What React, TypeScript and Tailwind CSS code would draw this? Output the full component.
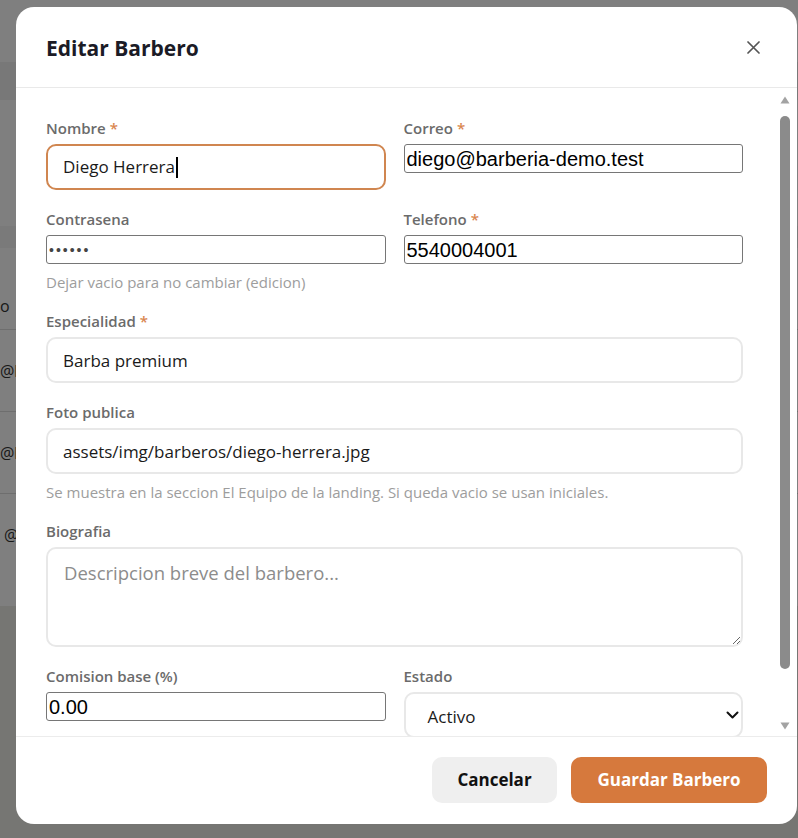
import type { ReactNode } from "react";

const ORANGE = "#d6793d";

function Label({ children, required = false }: { children: ReactNode; required?: boolean }) {
  return (
    <label className="mb-[6px] block text-[15px] font-semibold leading-5 text-[#6b6b6b]">
      {children}
      {required && <span className="ml-[4px] text-[#d9864f]">*</span>}
    </label>
  );
}

function Hint({ children }: { children: ReactNode }) {
  return <p className="mt-[8px] text-[15px] leading-5 text-[#9d9d9d]">{children}</p>;
}

// Inputs that keep the browser's stock look (no custom class from the app)
const nativeInput =
  "block h-[29px] w-full rounded-[3px] border border-[#767676] bg-white px-[2px] font-['Liberation_Sans',Arial,sans-serif] text-[20px] text-black outline-none";

const styledInput =
  "block h-[46px] w-full rounded-[10px] border-2 border-[#e8e8e8] bg-white px-[15px] text-[17px] text-[#1a1a1a] outline-none";

function BackgroundPage() {
  return (
    <div className="flex h-full flex-col bg-[#edece6] text-[16px] text-[#333]">
      <div className="h-[62px] bg-white" />
      <div className="h-[38px] bg-[#f1f1f1]" />
      <div className="h-[126px] bg-white" />
      <div className="h-[22px] bg-[#f4f4f4]" />
      <div className="flex h-[82px] items-center border-b border-[#dcdcdc] bg-white">
        <span className="mt-[34px]">o</span>
      </div>
      <div className="flex h-[82px] items-center border-b border-[#dcdcdc] bg-white">
        <span>@barberia-demo.test</span>
      </div>
      <div className="flex h-[82px] items-center border-b border-[#dcdcdc] bg-white">
        <span>@barberia-demo.test</span>
      </div>
      <div className="flex h-[82px] items-center bg-white">
        <span className="ml-[4px]">@barberia-demo.test</span>
      </div>
      <div className="h-[30px] bg-white" />
    </div>
  );
}

function Scrollbar() {
  return (
    <div className="flex w-[15px] flex-col items-center bg-white pt-[8px] pb-[6px]">
      <svg width="10" height="8" viewBox="0 0 10 8">
        <path d="M5 0.5L9.5 7.5H0.5Z" fill="#a3a3a3" />
      </svg>
      <div className="mt-[12px] h-[553px] w-[10px] rounded-full bg-[#8b8b8b]" />
      <div className="flex-1" />
      <svg width="10" height="8" viewBox="0 0 10 8">
        <path d="M0.5 0.5H9.5L5 7.5Z" fill="#a3a3a3" />
      </svg>
    </div>
  );
}

export default function App() {
  return (
    <div className="relative h-[838px] w-[798px] overflow-hidden font-['Open_Sans','Noto_Sans',sans-serif]">
      <BackgroundPage />
      <div className="absolute inset-0 bg-black/50" />

      <div className="absolute left-[16px] top-[7px] flex h-[817px] w-[781px] flex-col overflow-hidden rounded-[18px] bg-white">
        {/* header */}
        <div className="flex h-[81px] shrink-0 items-center justify-between border-b border-[#e9e9e9] pl-[30px] pr-[37px] pt-[3px]">
          <h2 className="text-[21px] font-bold text-[#1b1b26]">Editar Barbero</h2>
          <button className="-mt-[3px] flex h-[14px] w-[14px] items-center justify-center text-[#555]">
            <svg width="13" height="13" viewBox="0 0 13 13" fill="none" stroke="currentColor" strokeWidth="1.7" strokeLinecap="round">
              <path d="M1 1l11 11M12 1L1 12" />
            </svg>
          </button>
        </div>

        {/* body */}
        <div className="flex min-h-0 flex-1">
          <div className="min-w-0 flex-1 overflow-hidden pl-[30px] pr-[34px] pt-[30px]">
            <div className="flex flex-col gap-[19px]">
              <div className="grid grid-cols-2 gap-x-[18px]">
                <div>
                  <Label required>Nombre</Label>
                  <div className="flex h-[46px] w-full items-center rounded-[10px] border-2 border-[#d08650] px-[15px] text-[17px] text-[#1a1a1a]">
                    Diego Herrera
                    <span className="ml-[1px] h-[21px] w-[2px] bg-black" />
                  </div>
                </div>
                <div>
                  <Label required>Correo</Label>
                  <input className={nativeInput} type="email" defaultValue="diego@barberia-demo.test" />
                </div>
              </div>

              <div className="grid grid-cols-2 gap-x-[18px]">
                <div>
                  <Label>Contrasena</Label>
                  <input
                    className="block h-[29px] w-full rounded-[3px] border border-[#767676] bg-white px-[2px] font-['Liberation_Sans',Arial,sans-serif] text-[14px] tracking-[2px] text-[#444] outline-none"
                    type="password"
                    defaultValue="secret"
                  />
                  <Hint>Dejar vacio para no cambiar (edicion)</Hint>
                </div>
                <div>
                  <Label required>Telefono</Label>
                  <input className={nativeInput} type="tel" defaultValue="5540004001" />
                </div>
              </div>

              <div>
                <Label required>Especialidad</Label>
                <input className={styledInput} defaultValue="Barba premium" />
              </div>

              <div>
                <Label>Foto publica</Label>
                <input className={styledInput} defaultValue="assets/img/barberos/diego-herrera.jpg" />
                <Hint>Se muestra en la seccion El Equipo de la landing. Si queda vacio se usan iniciales.</Hint>
              </div>

              <div>
                <Label>Biografia</Label>
                <textarea
                  className="block h-[100px] w-full rounded-[10px] border-2 border-[#e8e8e8] bg-white px-[16px] py-[12px] text-[18.5px] leading-6 text-[#1a1a1a] outline-none placeholder:text-[#8c8c8c]"
                  placeholder="Descripcion breve del barbero..."
                />
              </div>

              <div className="grid grid-cols-2 gap-x-[18px] pb-[24px]">
                <div>
                  <Label>Comision base (%)</Label>
                  <input className={nativeInput} type="text" defaultValue="0.00" />
                </div>
                <div>
                  <Label>Estado</Label>
                  <div className="flex h-[46px] w-full items-center justify-between rounded-[10px] border-2 border-[#e8e8e8] pl-[22px] pr-[2px] text-[17px] text-[#1a1a1a]">
                    <span className="pt-[4px]">Activo</span>
                    <svg width="13" height="8" viewBox="0 0 13 8" fill="none" stroke="#111" strokeWidth="2" strokeLinecap="round" strokeLinejoin="round">
                      <path d="M1.5 1.5l5 5 5-5" />
                    </svg>
                  </div>
                </div>
              </div>
            </div>
          </div>
          <Scrollbar />
          <div className="w-[5px]" />
        </div>

        {/* footer */}
        <div className="flex shrink-0 justify-end gap-[14px] border-t border-[#ececec] px-[30px] pt-[20px] pb-[21px]">
          <button className="h-[46px] w-[125px] rounded-[10px] bg-[#efefef] text-[17px] font-bold text-[#111]">Cancelar</button>
          <button className="h-[46px] w-[196px] rounded-[10px] text-[17px] font-bold text-white" style={{ backgroundColor: ORANGE }}>
            Guardar Barbero
          </button>
        </div>
      </div>
    </div>
  );
}
